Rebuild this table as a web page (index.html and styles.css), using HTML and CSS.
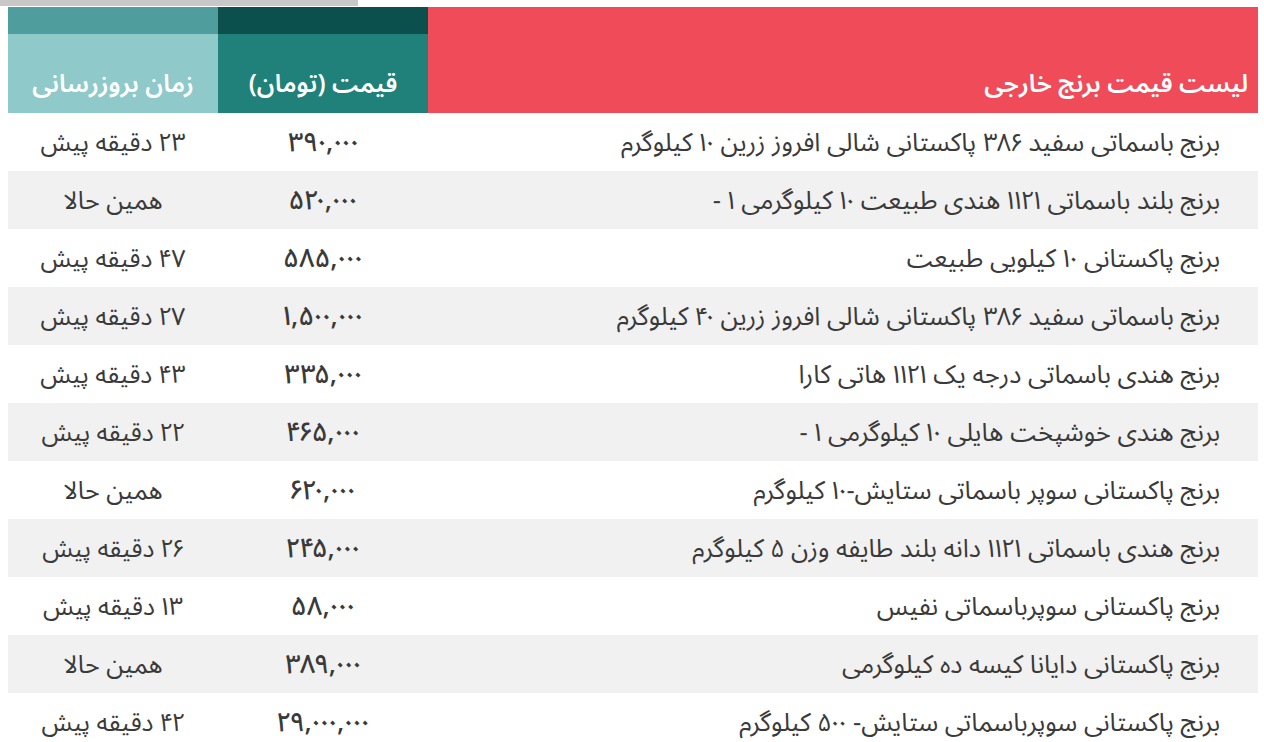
FILE: index.html
```html
<!DOCTYPE html>
<html lang="fa" dir="rtl">
<head>
<meta charset="utf-8">
<title>لیست قیمت برنج خارجی</title>
<link rel="stylesheet" href="styles.css">
</head>
<body>
<div class="scrollbar"></div>
<div class="wrap">
  <div class="table">
    <div class="h h-title">لیست قیمت برنج خارجی</div>
    <div class="h h-price-top"></div>
    <div class="h h-time-top"></div>
    <div class="h h-price">قیمت (تومان)</div>
    <div class="h h-time">زمان بروزرسانی</div>

    <div class="c name">برنج باسماتی سفید ۳۸۶ پاکستانی شالی افروز زرین ۱۰ کیلوگرم</div>
    <div class="c num">۳۹۰,۰۰۰</div>
    <div class="c time">۲۳ دقیقه پیش</div>

    <div class="c name alt">برنج بلند باسماتی ۱۱۲۱ هندی طبیعت ۱۰ کیلوگرمی ۱ -</div>
    <div class="c num alt">۵۲۰,۰۰۰</div>
    <div class="c time alt">همین حالا</div>

    <div class="c name">برنج پاکستانی ۱۰ کیلویی طبیعت</div>
    <div class="c num">۵۸۵,۰۰۰</div>
    <div class="c time">۴۷ دقیقه پیش</div>

    <div class="c name alt">برنج باسماتی سفید ۳۸۶ پاکستانی شالی افروز زرین ۴۰ کیلوگرم</div>
    <div class="c num alt">۱,۵۰۰,۰۰۰</div>
    <div class="c time alt">۲۷ دقیقه پیش</div>

    <div class="c name">برنج هندی باسماتی درجه یک ۱۱۲۱ هاتی کارا</div>
    <div class="c num">۳۳۵,۰۰۰</div>
    <div class="c time">۴۳ دقیقه پیش</div>

    <div class="c name alt">برنج هندی خوشپخت هایلی ۱۰ کیلوگرمی ۱ -</div>
    <div class="c num alt">۴۶۵,۰۰۰</div>
    <div class="c time alt">۲۲ دقیقه پیش</div>

    <div class="c name">برنج پاکستانی سوپر باسماتی ستایش-۱۰ کیلوگرم</div>
    <div class="c num">۶۲۰,۰۰۰</div>
    <div class="c time">همین حالا</div>

    <div class="c name alt">برنج هندی باسماتی ۱۱۲۱ دانه بلند طایفه وزن ۵ کیلوگرم</div>
    <div class="c num alt">۲۴۵,۰۰۰</div>
    <div class="c time alt">۲۶ دقیقه پیش</div>

    <div class="c name">برنج پاکستانی سوپرباسماتی نفیس</div>
    <div class="c num">۵۸,۰۰۰</div>
    <div class="c time">۱۳ دقیقه پیش</div>

    <div class="c name alt">برنج پاکستانی دایانا کیسه ده کیلوگرمی</div>
    <div class="c num alt">۳۸۹,۰۰۰</div>
    <div class="c time alt">همین حالا</div>

    <div class="c name">برنج پاکستانی سوپرباسماتی ستایش- ۵۰۰ کیلوگرم</div>
    <div class="c num">۲۹,۰۰۰,۰۰۰</div>
    <div class="c time">۴۲ دقیقه پیش</div>
  </div>
</div>
</body>
</html>
```

FILE: styles.css
```css
html, body {
  margin: 0;
  padding: 0;
  background: #ffffff;
}
body {
  font-family: "Noto Sans Arabic UI", "Noto Sans Arabic", "DejaVu Sans", sans-serif;
  color: #3a3a3a;
  direction: rtl;
}
.scrollbar {
  direction: ltr;
  width: 358px;
  height: 6px;
  background: #c8c8c8;
  margin-right: auto;
  margin-left: 0;
}
.wrap {
  margin: 1px 6px 0 8px;
}
.table {
  display: grid;
  grid-template-columns: 830px 210px 210px;
  grid-template-rows: 27px 79px;
  grid-auto-rows: 58px;
}
.h {
  color: #ffffff;
  font-weight: 600;
  font-size: 25px;
  line-height: 36px;
  display: flex;
  align-items: flex-end;
  justify-content: center;
  padding-bottom: 13px;
  box-sizing: border-box;
  white-space: nowrap;
}
.h-title {
  grid-row: 1 / span 2;
  background: #f04b58;
  justify-content: flex-start;
  padding-right: 10px;
}
.h-price-top { background: #0c504d; padding: 0; }
.h-time-top { background: #4f9d9d; padding: 0; }
.h-price { background: #20807a; }
.h-time { background: #8fc9c9; }
.c {
  display: flex;
  align-items: center;
  font-size: 25.5px;
  line-height: 34px;
  padding-bottom: 3px;
  box-sizing: border-box;
  white-space: nowrap;
}
.name {
  padding-right: 38px;
}
.num {
  justify-content: center;
  font-size: 27px;
  font-weight: 500;
}
.time {
  justify-content: center;
  font-size: 25px;
}
.alt {
  background: #f1f1f1;
}
```
